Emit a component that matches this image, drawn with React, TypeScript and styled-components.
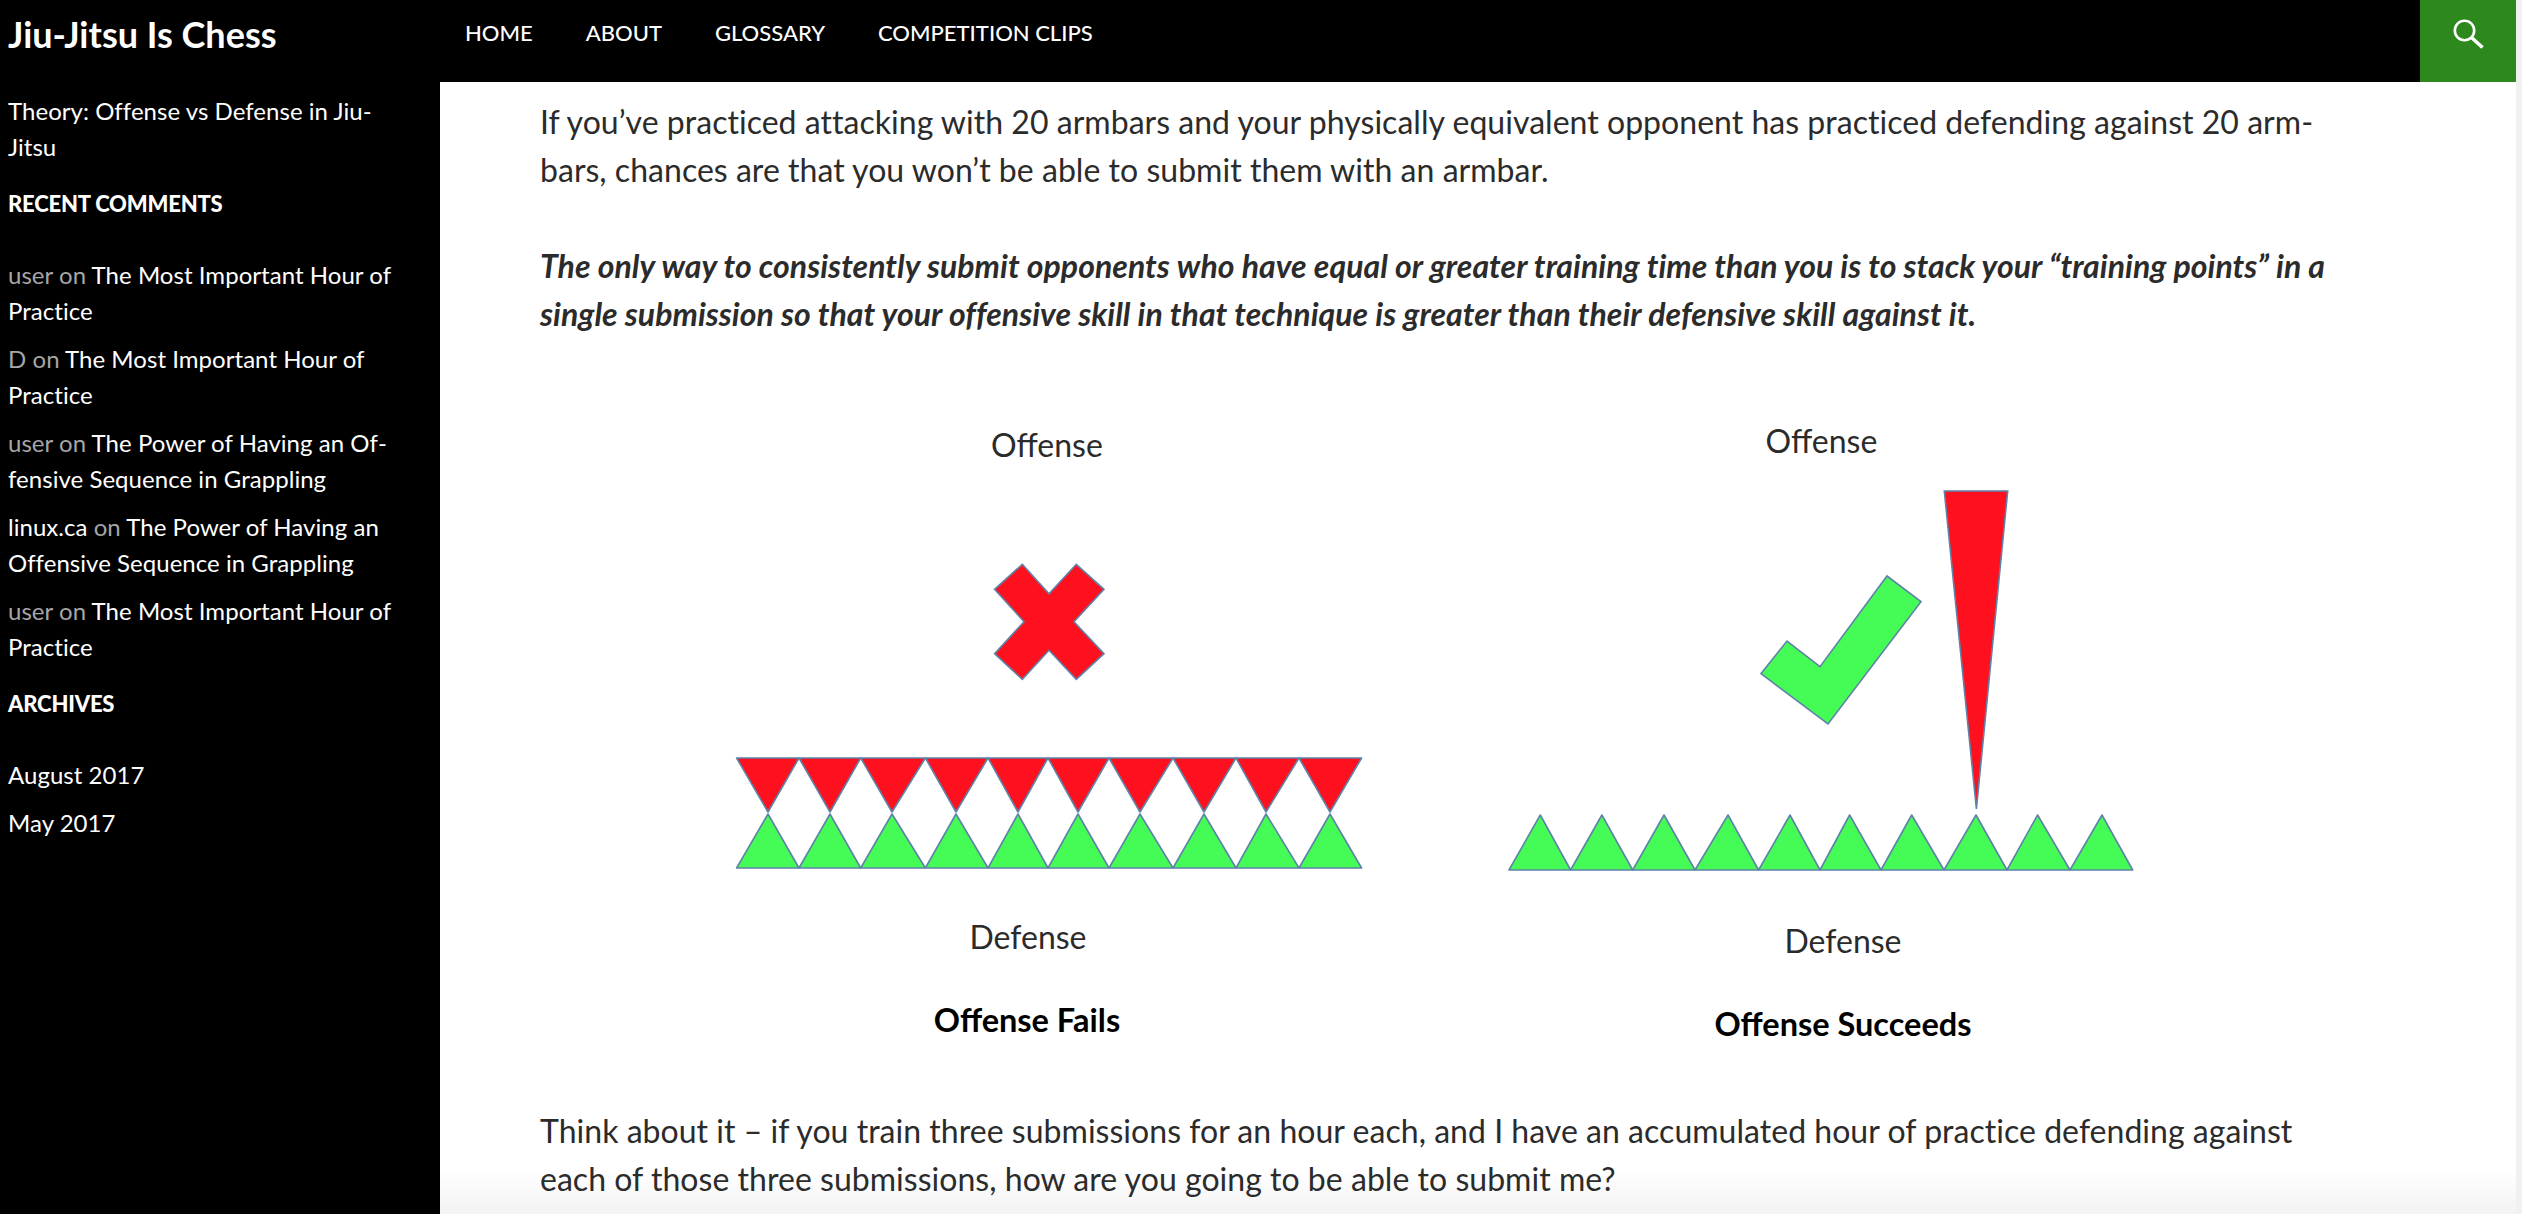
import React from 'react';
import styled, { createGlobalStyle } from 'styled-components';

const GlobalStyle = createGlobalStyle`
  html, body {
    margin: 0;
    height: 100%;
    overflow: hidden;
    background: #fff;
    font-family: Lato, "Open Sans", sans-serif;
    color: #2b2b2b;
  }
`;

const Page = styled.div`
  display: flex;
  width: 2522px;
  height: 1214px;
  overflow: hidden;
`;

const Window = styled.div`
  flex: 1;
  display: flex;
  flex-direction: column;
  min-width: 0;
`;

const Scrollbar = styled.div`
  width: 6px;
  background: #f1f1f1;
`;

const Header = styled.header`
  display: flex;
  align-items: flex-start;
  height: 82px;
  background: #000;
  flex-shrink: 0;
`;

const SiteTitle = styled.h1`
  width: 440px;
  margin: 0;
  padding: 11px 0 0 8px;
  box-sizing: border-box;
  font-size: 36px;
  line-height: 46px;
  font-weight: 700;
  color: #fff;
`;

const Nav = styled.nav`
  display: flex;
  flex: 1;
  padding: 15px 0 0 25px;
  gap: 53px;
`;

const NavItem = styled.a`
  font-size: 22px;
  line-height: 36px;
  font-weight: 500;
  color: #fff;
  text-transform: uppercase;
`;

const SearchButton = styled.button`
  width: 96px;
  height: 82px;
  border: 0;
  padding: 0 0 12px 2px;
  background: #2d881d;
  color: #fff;
  display: flex;
  align-items: center;
  justify-content: center;
`;

const Body = styled.div`
  flex: 1;
  display: flex;
  min-height: 0;
`;

const Sidebar = styled.aside`
  width: 440px;
  flex-shrink: 0;
  box-sizing: border-box;
  padding: 11px 40px 0 8px;
  background: #000;
  color: #fff;
  font-size: 24px;
  line-height: 36px;
  letter-spacing: 0.04px;
`;

const SideLink = styled.div`
  margin-bottom: 12px;
`;

const WidgetTitle = styled.h2`
  margin: 21px 0 35px;
  font-size: 22px;
  line-height: 36px;
  font-weight: 900;
  letter-spacing: -0.2px;
  text-transform: uppercase;
`;

const CommentList = styled.ul`
  margin: 0;
  padding: 0;
  list-style: none;
`;

const CommentItem = styled.li`
  margin-bottom: 12px;
  color: #a6a6a6;
`;

const CommentLink = styled.a`
  color: #fff;
`;

const Main = styled.main`
  flex: 1;
  min-width: 0;
  padding: 16px 0 0 100px;
  background: linear-gradient(to bottom, #fff calc(100% - 44px), #f3f3f3);
`;

const Paragraph = styled.p<{ $italic?: boolean }>`
  width: 1810px;
  margin: 0 0 48px;
  font-size: 32px;
  line-height: 48px;
  color: #2b2b2b;
  font-weight: ${(props) => (props.$italic ? 700 : 400)};
  font-style: ${(props) => (props.$italic ? 'italic' : 'normal')};
  letter-spacing: ${(props) => (props.$italic ? '0.05px' : '0.03px')};
`;

const Figure = styled.svg`
  display: block;
  width: 1500px;
  height: 680px;
  margin: 63px 0 26px 180px;
`;

const FigureLabel = styled.text<{ $bold?: boolean }>`
  font-family: Lato, "Open Sans", sans-serif;
  font-size: ${(props) => (props.$bold ? 32.5 : 32)}px;
  font-weight: ${(props) => (props.$bold ? 700 : 400)};
  fill: ${(props) => (props.$bold ? '#000' : '#2b2b2b')};
  text-anchor: middle;
`;

const RED = '#fe101f';
const GREEN = '#45fb55';
const EDGE = '#5f83a8';

const leftBase = [736.6, 799, 860.7, 925.4, 988, 1048, 1109, 1173, 1236, 1299, 1361.6];
const leftApex = [768, 830, 892, 956, 1018, 1078, 1140, 1204, 1266, 1330];
const rightBase = [1509, 1570.6, 1632.7, 1695, 1758.6, 1820, 1881, 1944, 2007, 2070, 2132.7];
const rightApex = [1540.3, 1601.9, 1664, 1728, 1790, 1849.6, 1911.7, 1976, 2037.6, 2102];

const comments = [
  { author: 'user', post: 'The Most Important Hour of Practice' },
  { author: 'D', post: 'The Most Important Hour of Practice' },
  { author: 'user', post: 'The Power of Having an Of\u00adfensive Sequence in Grappling' },
  { author: 'linux.ca', post: 'The Power of Having an Offensive Sequence in Grappling', linked: true },
  { author: 'user', post: 'The Most Important Hour of Practice' },
];

const Triangles = ({ base, apex, top, tip, fill }: { base: number[]; apex: number[]; top: number; tip: number; fill: string }) => (
  <>
    {apex.map((x, index) => (
      <polygon
        key={index}
        points={`${base[index]},${top} ${x},${tip} ${base[index + 1]},${top}`}
        fill={fill}
        stroke={EDGE}
        strokeWidth="1.6"
        strokeLinejoin="round"
      />
    ))}
  </>
);

const App = () => {
  return (
    <Page>
      <GlobalStyle />
      <Window>
        <Header>
          <SiteTitle>Jiu-Jitsu Is Chess</SiteTitle>
          <Nav>
            <NavItem>Home</NavItem>
            <NavItem>About</NavItem>
            <NavItem>Glossary</NavItem>
            <NavItem>Competition Clips</NavItem>
          </Nav>
          <SearchButton aria-label="Search">
            <svg width="32" height="32" viewBox="0 0 32 32" fill="none" stroke="currentColor" strokeWidth="2.6">
              <circle cx="11.5" cy="11.5" r="9.7" />
              <path d="M18.5 18.5 L29.5 28.5" strokeWidth="3.6" />
            </svg>
          </SearchButton>
        </Header>
        <Body>
          <Sidebar>
            <SideLink>Theory: Offense vs Defense in Jiu-Jitsu</SideLink>
            <WidgetTitle>Recent Comments</WidgetTitle>
            <CommentList>
              {comments.map((comment, index) => (
                <CommentItem key={index}>
                  {comment.linked ? <CommentLink>{comment.author}</CommentLink> : comment.author} on{' '}
                  <CommentLink>{comment.post}</CommentLink>
                </CommentItem>
              ))}
            </CommentList>
            <WidgetTitle>Archives</WidgetTitle>
            <SideLink>August 2017</SideLink>
            <SideLink>May 2017</SideLink>
          </Sidebar>
          <Main>
            <Paragraph>
              If you’ve practiced attacking with 20 armbars and your physically equivalent opponent has practiced
              defending against 20 arm{'\u00ad'}bars, chances are that you won’t be able to submit them with an armbar.
            </Paragraph>
            <Paragraph $italic>
              The only way to consistently submit opponents who have equal or greater training time than you is to
              stack your “training points” in a single submission so that your offensive skill in that technique is
              greater than their defensive skill against it.
            </Paragraph>
            <Figure viewBox="720 400 1500 680">
              <FigureLabel x="1047" y="456">Offense</FigureLabel>
              <polygon
                points="1022.3,563.3 1049,592.7 1076.3,563.3 1104,588.3 1074,620.7 1104,652.7 1076.3,678.3 1049,649.3 1022.3,678.3 994.6,652.7 1024,620.7 994.6,588.3"
                fill={RED}
                stroke={EDGE}
                strokeWidth="1.6"
              />
              <Triangles base={leftBase} apex={leftApex} top={757} tip={811} fill={RED} />
              <Triangles base={leftBase} apex={leftApex} top={867} tip={813} fill={GREEN} />
              <FigureLabel x="1028" y="948">Defense</FigureLabel>
              <FigureLabel $bold x="1027" y="1031">Offense Fails</FigureLabel>

              <FigureLabel x="1821.5" y="452">Offense</FigureLabel>
              <polygon points="1944.3,490 2007.7,490 1976.4,808" fill={RED} stroke={EDGE} strokeWidth="1.6" />
              <polygon
                points="1887,575 1921,600.7 1828,723 1761,672.7 1787,640 1820,665.7"
                fill={GREEN}
                stroke={EDGE}
                strokeWidth="1.6"
              />
              <Triangles base={rightBase} apex={rightApex} top={869} tip={814} fill={GREEN} />
              <FigureLabel x="1843" y="952">Defense</FigureLabel>
              <FigureLabel $bold x="1843" y="1035">Offense Succeeds</FigureLabel>
            </Figure>
            <Paragraph>
              Think about it – if you train three submissions for an hour each, and I have an accumulated hour of
              practice defending against each of those three submissions, how are you going to be able to submit me?
            </Paragraph>
          </Main>
        </Body>
      </Window>
      <Scrollbar />
    </Page>
  );
};

export default App;
